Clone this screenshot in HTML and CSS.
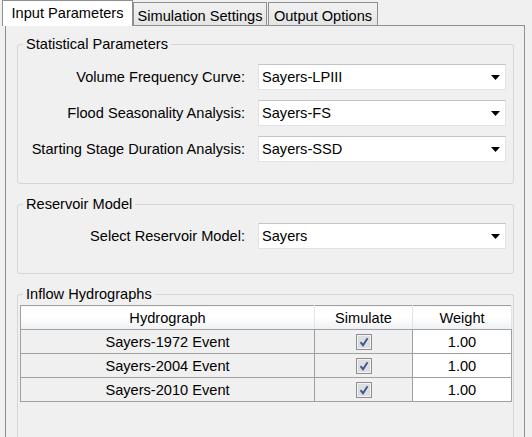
FILE: index.html
```html
<!DOCTYPE html>
<html>
<head>
<meta charset="utf-8">
<title>Input Parameters</title>
<link rel="stylesheet" href="styles.css">
</head>
<body>
<div class="window">
  <div class="tabstrip">
    <div class="tab active">Input Parameters</div>
    <div class="tab tab-sim">Simulation Settings</div>
    <div class="tab tab-out">Output Options</div>
  </div>
  <div class="panel">
    <fieldset class="group group-stat">
      <legend>Statistical Parameters</legend>
      <div class="form">
        <label>Volume Frequency Curve:</label>
        <div class="combo"><span>Sayers-LPIII</span><svg class="arrow" width="9" height="5" viewBox="0 0 9 5"><path d="M0 0H9L4.5 5Z"/></svg></div>
        <label>Flood Seasonality Analysis:</label>
        <div class="combo"><span>Sayers-FS</span><svg class="arrow" width="9" height="5" viewBox="0 0 9 5"><path d="M0 0H9L4.5 5Z"/></svg></div>
        <label>Starting Stage Duration Analysis:</label>
        <div class="combo"><span>Sayers-SSD</span><svg class="arrow" width="9" height="5" viewBox="0 0 9 5"><path d="M0 0H9L4.5 5Z"/></svg></div>
      </div>
    </fieldset>
    <fieldset class="group group-res">
      <legend>Reservoir Model</legend>
      <div class="form form-res">
        <label>Select Reservoir Model:</label>
        <div class="combo"><span>Sayers</span><svg class="arrow" width="9" height="5" viewBox="0 0 9 5"><path d="M0 0H9L4.5 5Z"/></svg></div>
      </div>
    </fieldset>
    <fieldset class="group group-inflow">
      <legend>Inflow Hydrographs</legend>
      <table class="grid">
        <colgroup><col class="c1"><col class="c2"><col class="c3"></colgroup>
        <thead>
          <tr><th>Hydrograph</th><th>Simulate</th><th>Weight</th></tr>
        </thead>
        <tbody>
          <tr><td class="name">Sayers-1972 Event</td><td class="sim"><span class="check"><svg width="12" height="12" viewBox="0 0 12 12"><path d="M2.5 6.2 L5 9.2 L9.6 2.2" /></svg></span></td><td class="weight">1.00</td></tr>
          <tr><td class="name">Sayers-2004 Event</td><td class="sim"><span class="check"><svg width="12" height="12" viewBox="0 0 12 12"><path d="M2.5 6.2 L5 9.2 L9.6 2.2" /></svg></span></td><td class="weight">1.00</td></tr>
          <tr><td class="name">Sayers-2010 Event</td><td class="sim"><span class="check"><svg width="12" height="12" viewBox="0 0 12 12"><path d="M2.5 6.2 L5 9.2 L9.6 2.2" /></svg></span></td><td class="weight">1.00</td></tr>
        </tbody>
      </table>
    </fieldset>
  </div>
</div>
</body>
</html>
```

FILE: styles.css
```css
html, body {
  margin: 0;
  padding: 0;
}
body {
  width: 532px;
  height: 437px;
  overflow: hidden;
  background: #f0f0f0;
  font-family: "Liberation Sans", Arial, sans-serif;
  font-size: 14.6px;
  line-height: 16px;
  color: #000;
}
.window {
  padding-left: 2px;
}
.tabstrip {
  display: flex;
  align-items: flex-end;
  height: 25px;
}
.tab {
  box-sizing: border-box;
  height: 23px;
  padding-top: 5px;
  border: 1px solid #8e8f8f;
  border-bottom: none;
  background: linear-gradient(#f2f2f2, #e4e4e4);
  text-align: center;
  white-space: nowrap;
}
.tab.active {
  position: relative;
  z-index: 1;
  width: 131px;
  height: 26px;
  margin-bottom: -1px;
  padding-top: 4px;
  background: #fff;
}
.tab-sim {
  width: 134px;
}
.tab-out {
  width: 110px;
  margin-left: 1px;
}
.panel {
  box-sizing: border-box;
  display: flex;
  flex-direction: column;
  width: 520px;
  height: 412px;
  margin-left: 3px;
  padding: 0 10px 0 11px;
  border: 1px solid #8e8f8f;
  border-bottom: none;
  background: #f0f0f0;
}
.group {
  margin: 12px 0 0;
  padding: 0;
  min-width: 0;
  border: 1px solid #d5d5d5;
  border-radius: 3px;
}
.group-stat {
  margin-top: 10px;
}
.group legend {
  margin-left: 5px;
  padding: 0 3px;
  line-height: 16px;
}
.form {
  display: grid;
  grid-template-columns: 1fr 248px;
  column-gap: 13px;
  row-gap: 10px;
  padding: 12px 7px 21px 0;
}
.form-res {
  padding-top: 11px;
  padding-bottom: 24px;
}
.form label {
  align-self: center;
  text-align: right;
  white-space: nowrap;
}
.combo {
  box-sizing: border-box;
  height: 26px;
  display: flex;
  align-items: center;
  padding-left: 3px;
  background: #fff;
  border: 1px solid #e2e2e2;
  border-top-color: #c4c4c4;
}
.combo .arrow {
  margin-left: auto;
  margin-right: 5px;
  fill: #000;
}
.group-inflow {
  flex: 1;
  border-bottom: none;
  border-radius: 3px 3px 0 0;
}
.grid {
  margin: 3px 0 0 2px;
  width: 491px;
  table-layout: fixed;
  border-collapse: collapse;
  border: 1px solid #a0a0a0;
}
.grid .c1 { width: 294px; }
.grid .c2 { width: 98px; }
.grid .c3 { width: 99px; }
.grid th {
  height: 23px;
  padding: 0;
  font-weight: normal;
  text-align: center;
  background: linear-gradient(#ffffff 0%, #ffffff 45%, #eef0f3 100%);
  border-right: 1px solid #e3e4e6;
  border-bottom: 1px solid #a0a0a0;
}
.grid td {
  height: 23px;
  padding: 0;
  text-align: center;
  border: 1px solid #a0a0a0;
  background: #f0f0f0;
}
.grid td.weight {
  background: #fff;
}
.grid td.sim {
  line-height: 0;
}
.check {
  display: inline-block;
  box-sizing: border-box;
  width: 16px;
  height: 16px;
  border: 1px solid #8f8f8f;
  background: #dedede;
  box-shadow: inset 0 0 0 1px #f2f2f2;
  vertical-align: middle;
}
.check svg {
  margin: 1px;
  fill: none;
  stroke: #3f5a9c;
  stroke-width: 2;
}
```
